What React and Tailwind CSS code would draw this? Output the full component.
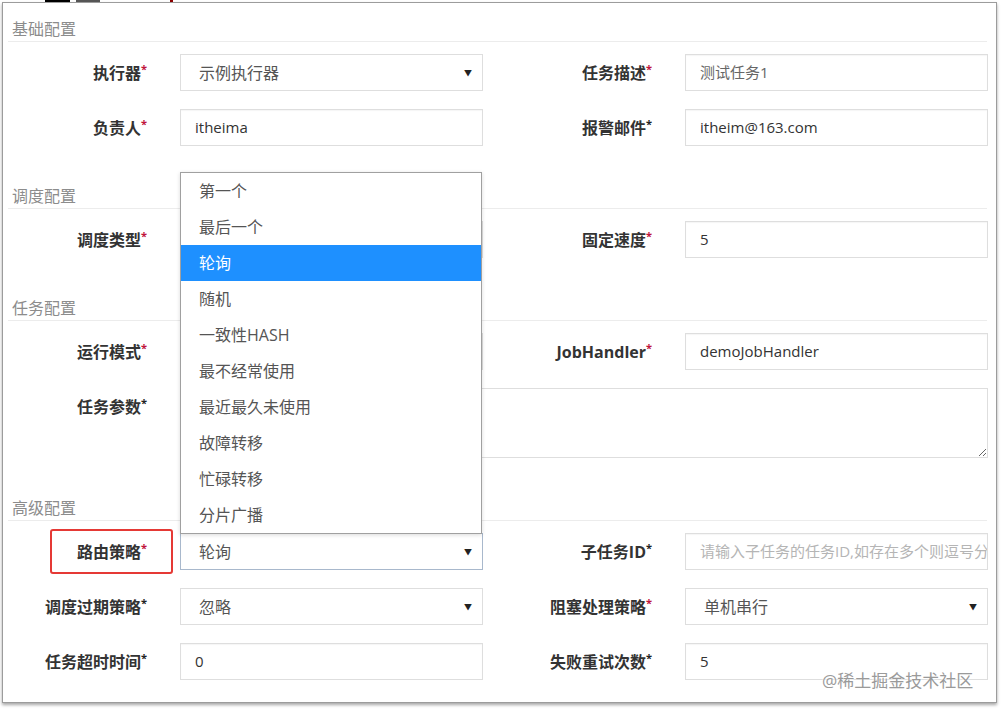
const font = { fontFamily: '"Open Sans","Noto Sans CJK SC",sans-serif' };

const routes = ["第一个", "最后一个", "轮询", "随机", "一致性HASH", "最不经常使用", "最近最久未使用", "故障转移", "忙碌转移", "分片广播"];

function Label({ text, black, boxed }) {
  return (
    <div className="relative flex items-center justify-end h-[37px] pr-[3px] text-[16px] font-bold text-[#333]">
      <span>
        {text}
        <span className={black ? "text-[#222] text-[11px] align-top" : "text-[#c0143c] text-[11px] align-top"}>*</span>
      </span>
      {boxed && (
        <div className="absolute left-[47px] top-[-4px] w-[123px] h-[45px] border-2 border-[#e53935] rounded-[3px]" />
      )}
    </div>
  );
}

function Input({ value, placeholder, muted }) {
  return (
    <div className="h-[37px] border border-[#dedede] bg-white shadow-[inset_0_1px_1px_rgba(0,0,0,0.04)] flex items-center px-[14px] text-[15px] overflow-hidden whitespace-nowrap">
      {value ? (
        <span className={muted ? "text-[#666]" : "text-[#333]"}>{value}</span>
      ) : (
        <span className="text-[#b5b5b5]">{placeholder}</span>
      )}
    </div>
  );
}

function Select({ value, focus, children }) {
  return (
    <div
      className={
        "relative h-[37px] border bg-white flex items-center pl-[18px] pr-[10px] text-[16px] text-[#555] " +
        (focus ? "border-[#a8b8cc]" : "border-[#dedede]")
      }
    >
      <span className="flex-1">{value}</span>
      <span className="text-[8px] text-[#222]">▼</span>
      {children}
    </div>
  );
}

function Heading({ text, first }) {
  return (
    <div className={(first ? "" : "mt-[24px] ") + "ml-[5px] mr-[9px] pl-[4px] pt-[16px] pb-[2px] border-b border-[#ececec]"}>
      <div className="leading-[20px] text-[16px] text-[#8c8c8c]">{text}</div>
    </div>
  );
}

function Grid({ children }) {
  return (
    <div className="mt-[12px] grid grid-cols-[147px_303px_142px_303px] gap-x-[30px] gap-y-[18px]">
      {children}
    </div>
  );
}

export default function App() {
  return (
    <div className="relative w-[1002px] h-[710px] bg-white overflow-hidden" style={font}>
      <div className="flex h-[2px]">
        <div className="ml-[45px] w-[25px] bg-black" />
        <div className="ml-[6px] w-[24px] bg-[#555]" />
        <div className="ml-[70px] w-[3px] bg-[#8b0000]" />
      </div>
      <div className="ml-[2px] w-[995px] border border-[#9c9c9c] bg-white pb-[22px] shadow-[0_2px_3px_rgba(0,0,0,0.35)]">
        <Heading text="基础配置" first />
        <Grid>
          <Label text="执行器" />
          <Select value="示例执行器" />
          <Label text="任务描述" />
          <Input value="测试任务1" muted />
          <Label text="负责人" />
          <Input value="itheima" />
          <Label text="报警邮件" black />
          <Input value="itheim@163.com" />
        </Grid>

        <Heading text="调度配置" />
        <Grid>
          <Label text="调度类型" />
          <Select value="" />
          <Label text="固定速度" />
          <Input value="5" />
        </Grid>

        <Heading text="任务配置" />
        <Grid>
          <Label text="运行模式" />
          <Select value="" />
          <Label text="JobHandler" />
          <Input value="demoJobHandler" />
          <Label text="任务参数" black />
          <textarea
            readOnly
            className="col-span-3 h-[70px] border border-[#dedede] bg-white outline-none"
          />
        </Grid>

        <Heading text="高级配置" />
        <Grid>
          <Label text="路由策略" boxed />
          <Select value="轮询" focus>
            <div className="absolute left-[-1px] bottom-full w-[302px] border border-[#a0a0a0] bg-white shadow-[0_1px_4px_rgba(0,0,0,0.15)] z-10">
              {routes.map((r) => (
                <div
                  key={r}
                  className={
                    "h-[36px] flex items-center pl-[18px] text-[16px] " +
                    (r === "轮询" ? "bg-[#1e90ff] text-white" : "text-[#555]")
                  }
                >
                  {r}
                </div>
              ))}
            </div>
          </Select>
          <Label text="子任务ID" black />
          <Input placeholder="请输入子任务的任务ID,如存在多个则逗号分隔" />
          <Label text="调度过期策略" black />
          <Select value="忽略" />
          <Label text="阻塞处理策略" />
          <Select value="单机串行" />
          <Label text="任务超时时间" black />
          <Input value="0" />
          <Label text="失败重试次数" black />
          <Input value="5" />
        </Grid>
      </div>
      <div className="absolute left-[822px] top-[668px] text-[17px] text-[#9a9a9a] [text-shadow:0_0_2px_#fff,0_0_2px_#fff]">
        @稀土掘金技术社区
      </div>
    </div>
  );
}
